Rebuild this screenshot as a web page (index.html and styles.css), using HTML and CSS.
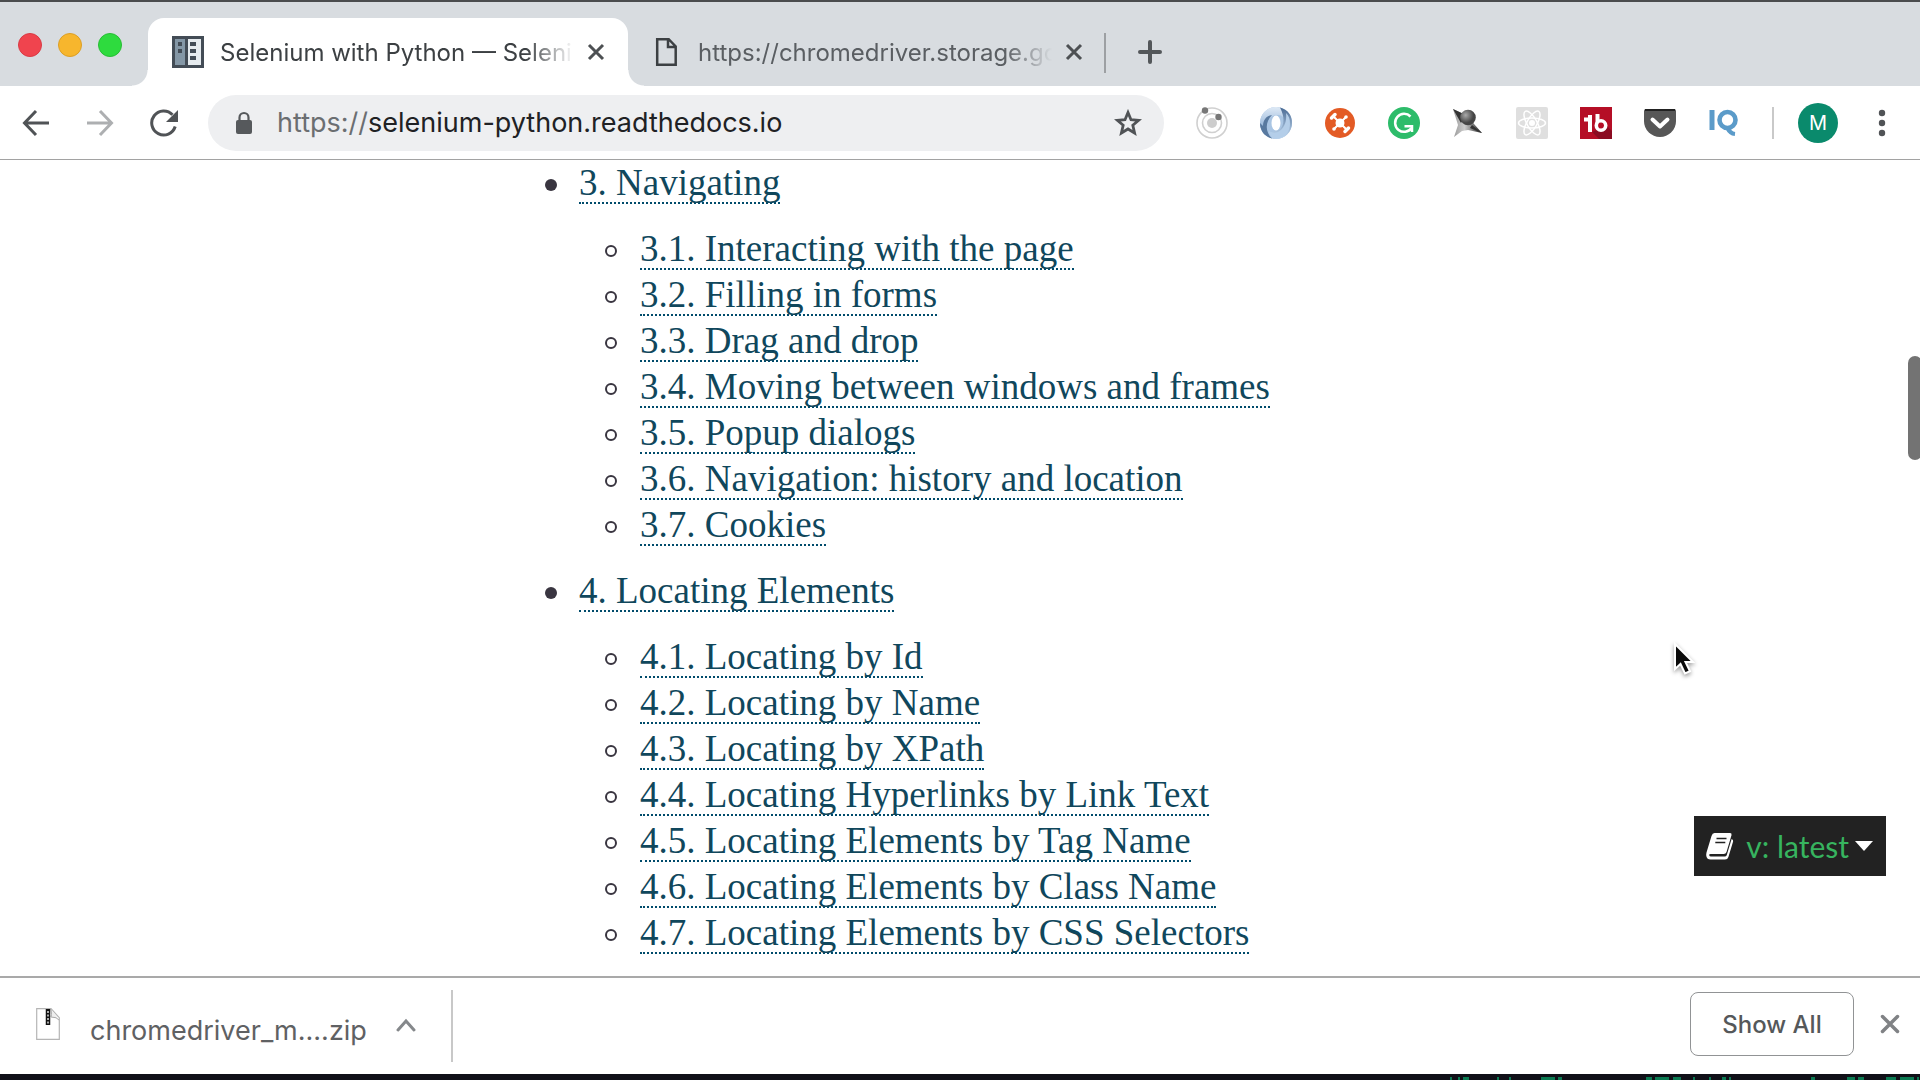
FILE: index.html
```html
<!DOCTYPE html>
<html lang="en">
<head>
<meta charset="utf-8">
<title>Selenium with Python — Selenium Python Bindings</title>
<link rel="stylesheet" href="styles.css">
</head>
<body>
<div class="browser">
  <header class="tab-strip">
    <div class="lights">
      <button class="light light-red" aria-label="Close window"></button>
      <button class="light light-yellow" aria-label="Minimize window"></button>
      <button class="light light-green" aria-label="Zoom window"></button>
    </div>
    <div class="tab tab-active">
      <svg class="icon32" viewBox="0 0 32 32"><path fill="#434c56" d="M0 0h32v32H0z"/><path fill="#8497a6" d="M3 3h10v26H3z"/><path fill="#e6ebef" d="M16 3h13v26H16z"/><path fill="#434c56" d="M6 6h4v4H6zM6 13h4v4H6zM18 6h6v4h-6zM18 13h6v4h-6zM18 20h6v4h-6z"/></svg>
      <span class="tab-title">Selenium with Python — Seleni</span>
      <button class="plain" aria-label="Close tab"><svg class="icon20" viewBox="0 0 20 20"><path d="M3 3l14 14M17 3L3 17" stroke="#4d5053" stroke-width="3"/></svg></button>
    </div>
    <div class="tab tab-idle">
      <svg class="icon32" viewBox="0 0 32 32"><path fill="none" stroke="#3c4043" stroke-width="2.500" d="M7.200 3.200h11.500l7 7.300v18.300H7.200zM18 3.500V11h8"/></svg>
      <span class="tab-title">https://chromedriver.storage.go</span>
      <button class="plain" aria-label="Close tab"><svg class="icon20" viewBox="0 0 20 20"><path d="M3 3l14 14M17 3L3 17" stroke="#4d5053" stroke-width="3"/></svg></button>
    </div>
    <span class="tab-divider"></span>
    <button class="plain new-tab" aria-label="New tab"><svg class="icon24" viewBox="0 0 24 24"><path d="M12 2v20M2 12h20" stroke="#53575a" stroke-width="4" stroke-linecap="round"/></svg></button>
  </header>

  <nav class="toolbar">
    <div class="nav-buttons">
      <button class="plain" aria-label="Back"><svg class="icon28" viewBox="0 0 28 28"><path d="M27 14H3M14 2L2.500 14 14 26" fill="none" stroke="#505356" stroke-width="3"/></svg></button>
      <button class="plain" aria-label="Forward"><svg class="icon28" viewBox="0 0 28 28"><path d="M1 14h24M14 2l11.500 12L14 26" fill="none" stroke="#adafb1" stroke-width="3"/></svg></button>
      <button class="plain" aria-label="Reload"><svg class="icon28" viewBox="0 0 28 28"><path d="M25.200 17.500A12 12 0 1 1 22.500 5.800" fill="none" stroke="#505356" stroke-width="3"/><path d="M28 1v12H16z" fill="#505356"/></svg></button>
    </div>
    <div class="omnibox">
      <svg class="icon24" viewBox="0 0 24 24"><rect x="4" y="9" width="16" height="14" rx="2" fill="#56595c"/><path d="M7.500 10V6.500a4.500 4.500 0 0 1 9 0V10" fill="none" stroke="#56595c" stroke-width="2.200"/></svg>
      <label class="scheme" for="address">https://</label>
      <input class="address" id="address" type="text" value="selenium-python.readthedocs.io">
      <button class="plain" aria-label="Bookmark"><svg class="icon28" viewBox="0 0 28 28"><path d="M14 3.500l3 7.200 7.600.6-5.800 5 1.800 7.700L14 20l-6.600 4 1.800-7.700-5.800-5 7.600-.6z" fill="none" stroke="#505356" stroke-width="2.800"/></svg></button>
    </div>
    <div class="extensions">
      <button class="plain" aria-label="Orbit"><svg class="icon32" viewBox="0 0 32 32"><g fill="none" stroke="#d0d0d0"><circle cx="16" cy="16" r="15" stroke-width="1.600"/><circle cx="16" cy="16" r="9.500" stroke-width="1.600"/></g><circle cx="16" cy="16" r="5" fill="#cdcdcd"/><circle cx="9" cy="3.500" r="3.200" fill="#777"/><circle cx="22.500" cy="10" r="3.200" fill="#777"/></svg></button>
      <button class="plain" aria-label="JSON"><svg class="icon32" viewBox="0 0 32 32"><defs><linearGradient id="ja" x1="0" y1="0" x2="0" y2="1"><stop offset="0" stop-color="#dfeaf6"/><stop offset="1" stop-color="#7ba3cf"/></linearGradient><linearGradient id="jb" x1="0" y1="0" x2="0" y2="1"><stop offset="0" stop-color="#4a6b94"/><stop offset="1" stop-color="#c6dcf2"/></linearGradient></defs><circle cx="16" cy="16" r="16" fill="#a9c5e3"/><path fill="url(#ja)" d="M20 .5A16 16 0 0 0 0 16c0 5 2 9 5 12-2-10 3-20 13-20 3 0 6 2 7 5 0-6-2-10-5-12.500z"/><path fill="#58799f" d="M0 16c0 8 5 14 12 15.500C5 25 5 15 12 8 6 9 3 13 3 19z"/><path fill="url(#jb)" d="M20 .5c8 2 12 8 12 15.500S26 32 16 32c-4-1-7-4-7-8 10 4 20-6 11-23.500z"/><path fill="#b4cee9" d="M16 32c10-1 14-8 14-15 0-5-1-8-4-11 1 9-2 16-8 19-3 1-6 1-9-1 0 4 3 7 7 8z"/><ellipse cx="16" cy="16" rx="4.500" ry="7.500" fill="#fff"/></svg></button>
      <button class="plain" aria-label="Hub"><svg class="icon32" viewBox="0 0 32 32"><circle cx="16" cy="16" r="15" fill="#e35b25"/><path d="M9 9l14 14M22 10L10 22" stroke="#fff" stroke-width="2"/><circle cx="16" cy="16" r="4.500" fill="#fff"/><path d="M7.500 11L11 7.500M21 24.500l3.500-3.500" stroke="#fff" stroke-width="3.500" stroke-linecap="round"/><circle cx="22" cy="10" r="1.800" fill="#fff"/><circle cx="10" cy="22" r="1.800" fill="#fff"/></svg></button>
      <button class="plain" aria-label="Grammar"><svg class="icon32" viewBox="0 0 32 32"><circle cx="16" cy="16" r="16" fill="#2dbc6a"/><path d="M22.500 9.500a9 9 0 1 0 1 11.500" fill="none" stroke="#fff" stroke-width="2.500"/><path d="M16.500 19.300H24V25" fill="none" stroke="#fff" stroke-width="2.500"/></svg></button>
      <button class="plain" aria-label="Star ball"><svg class="icon32" viewBox="0 0 32 32"><defs><linearGradient id="sa"><stop offset="0" stop-color="#999"/><stop offset=".4" stop-color="#ccc"/><stop offset="1" stop-color="#222"/></linearGradient><radialGradient id="sb" cx=".35" cy=".35"><stop offset="0" stop-color="#aaa"/><stop offset="1" stop-color="#454545"/></radialGradient></defs><path d="M1 2l15 7 6 8 8 9-14-3-6 1-8 6 4-12z" fill="url(#sa)"/><path d="M1 2l13 6-5 8zM20 18l10 8-12-5z" fill="#333"/><circle cx="16" cy="10.500" r="7.800" fill="url(#sb)"/></svg></button>
      <button class="plain" aria-label="React"><svg class="icon32" viewBox="0 0 32 32"><rect width="32" height="32" rx="2" fill="#dfdfdf"/><g fill="none" stroke="#fff" stroke-width="1.500"><ellipse cx="16" cy="16" rx="13.500" ry="5"/><ellipse cx="16" cy="16" rx="13.500" ry="5" transform="rotate(60 16 16)"/><ellipse cx="16" cy="16" rx="13.500" ry="5" transform="rotate(120 16 16)"/></g><circle cx="16" cy="16" r="3" fill="#fff"/></svg></button>
      <button class="plain" aria-label="Tube"><svg class="icon32" viewBox="0 0 32 32"><path fill="#b50e26" d="M0 0h32v32H0z"/><path fill="#8b0c22" d="M12 25l15-6 5 5v8H19z"/><path d="M4 12.500h8M10 8v17" fill="none" stroke="#fff" stroke-width="4"/><path d="M17.500 7v12" fill="none" stroke="#fff" stroke-width="4"/><circle cx="21" cy="18.500" r="4.700" fill="#b50e26" stroke="#fff" stroke-width="3.600"/><path d="M19.500 15.500l4.500 3-4.500 3z" fill="#b50e26"/></svg></button>
      <button class="plain" aria-label="Pocket"><svg class="icon32" viewBox="0 0 32 32"><path d="M2 2h28q2 0 2 2v10a16 16 0 0 1-32 0V4q0-2 2-2z" fill="#575757"/><path d="M1 3h30" stroke="#222" stroke-width="2"/><path d="M8.500 12.500l7.500 7 7.500-7" fill="none" stroke="#fff" stroke-width="4" stroke-linecap="round" stroke-linejoin="round"/></svg></button>
      <button class="plain" aria-label="IQ"><svg class="icon32" viewBox="0 0 32 32"><path d="M1.500 3h5v20h-5z" fill="#5b9bc9"/><circle cx="19.500" cy="13" r="8" fill="none" stroke="#5b9bc9" stroke-width="4.600"/><path d="M19 20.500q3 6 8 6.500" fill="none" stroke="#5b9bc9" stroke-width="4"/></svg></button>
    </div>
    <span class="toolbar-divider"></span>
    <button class="plain avatar" aria-label="Profile">M</button>
    <button class="plain" aria-label="Menu"><svg class="icon28" viewBox="0 0 28 28"><g fill="#505356"><circle cx="14" cy="4" r="3.200"/><circle cx="14" cy="14" r="3.200"/><circle cx="14" cy="24" r="3.200"/></g></svg></button>
  </nav>

  <main class="viewport">
    <ul class="toc">
      <li><a href="#navigating">3. Navigating</a>
        <ul class="toc-sub">
          <li><a href="#n1">3.1. Interacting with the page</a></li>
          <li><a href="#n2">3.2. Filling in forms</a></li>
          <li><a href="#n3">3.3. Drag and drop</a></li>
          <li><a href="#n4">3.4. Moving between windows and frames</a></li>
          <li><a href="#n5">3.5. Popup dialogs</a></li>
          <li><a href="#n6">3.6. Navigation: history and location</a></li>
          <li><a href="#n7">3.7. Cookies</a></li>
        </ul>
      </li>
      <li><a href="#locating">4. Locating Elements</a>
        <ul class="toc-sub">
          <li><a href="#l1">4.1. Locating by Id</a></li>
          <li><a href="#l2">4.2. Locating by Name</a></li>
          <li><a href="#l3">4.3. Locating by XPath</a></li>
          <li><a href="#l4">4.4. Locating Hyperlinks by Link Text</a></li>
          <li><a href="#l5">4.5. Locating Elements by Tag Name</a></li>
          <li><a href="#l6">4.6. Locating Elements by Class Name</a></li>
          <li><a href="#l7">4.7. Locating Elements by CSS Selectors</a></li>
        </ul>
      </li>
    </ul>
    <div class="scroll-thumb"></div>
    <button class="version">
      <svg class="icon28" viewBox="0 0 28 28"><path fill="#fff" d="M8.500 1h15.500q2 0 1.500 2.200l-5 16.800q-.6 2-2.800 2H4.500q-1.600 0-1.300 1.200.3 1.200 1.800 1.200h14.200q1.200 0 1.600-1.300l4.800-16q2 .7 1.500 2.500l-4.700 15.400q-.8 2.500-3.400 2.500H4.500Q1 27.500.3 24q-.3-1.500.2-3.500L5.500 4q.9-3 3-3z"/><path d="M10.500 6.500h10M9.300 10.500h10" stroke="#222" stroke-width="1.600"/></svg>
      <span>v: latest</span>
      <svg class="version-caret" viewBox="0 0 18 10"><path fill="#fff" d="M0 0h18l-9 10z"/></svg>
    </button>
    <svg class="cursor" viewBox="0 0 24 34"><path d="M2 2v25l5.500-5 4.500 9.500 5-2.300-4.500-9.200H20z" fill="#0a0a0a" stroke="#fff" stroke-width="2"/></svg>
  </main>

  <footer class="shelf">
    <div class="download">
      <svg class="zip" viewBox="0 0 24 32"><path d="M.7.7H15l8.300 9v21.600H.7z" fill="#fff" stroke="#b5b5b5" stroke-width="1.200"/><path d="M15 1q1 7 0 8 6 0 8 3" fill="#eee" stroke="#aaa"/><path d="M12 1v16" stroke="#111" stroke-width="4.500"/><path d="M12 3v13" stroke="#ddd" stroke-width="1.500" stroke-dasharray="2 1.500"/></svg>
      <a class="file" href="#download">chromedriver_m....zip</a>
      <button class="plain" aria-label="Download options"><svg class="icon20" viewBox="0 0 20 20"><path d="M2 14l8-9 8 9" fill="none" stroke="#85888b" stroke-width="3" stroke-linecap="round"/></svg></button>
    </div>
    <button class="show-all">Show All</button>
    <button class="plain" aria-label="Close downloads bar"><svg class="icon20" viewBox="0 0 20 20"><path d="M2.500 2.500l15 15M17.500 2.500l-15 15" stroke="#808285" stroke-width="3.500" stroke-linecap="round"/></svg></button>
  </footer>
  <div class="desktop-edge">
    <svg class="terminal" viewBox="0 0 480 3"><path d="M10 1.500h470" stroke="#0b7a52" stroke-width="3" stroke-dasharray="2 6 2 3 6 28 2 10 2 30 14 3 4 84 6 3 14 4 8 12 2 14 2 11 4 3 2 80 4 32 8 3 6 22 10 4 14 3"/></svg>
  </div>
</div>
</body>
</html>
```
FILE: styles.css
```css
*,
*::before,
*::after { box-sizing: border-box; }

body {
  margin: 0;
  font-family: Inter, Roboto, sans-serif;
  color: #3c4043;
}

.browser {
  display: flex;
  flex-direction: column;
  height: 100vh;
  background: #fff;
  overflow: hidden;
}

button { font-family: inherit; }
svg { display: block; flex: none; }

.plain {
  display: block;
  flex: none;
  padding: 0;
  border: 0;
  background: none;
}

.icon20 { width: 20px; height: 20px; }
.icon24 { width: 24px; height: 24px; }
.icon28 { width: 28px; height: 28px; }
.icon32 { width: 32px; height: 32px; }

/* Tab strip */
.tab-strip {
  display: flex;
  flex: none;
  height: 86px;
  padding-top: 16px;
  border-top: 2px solid #4a4c4e;
  background: #d8dce0;
}

.lights {
  display: flex;
  flex: none;
  gap: 16px;
  width: 148px;
  padding: 15px 0 0 18px;
}

.light {
  width: 24px;
  height: 24px;
  padding: 0;
  border: 1px solid;
  border-radius: 50%;
}

.light-red { background: #f0444e; border-color: #d93a44; }
.light-yellow { background: #f7b62d; border-color: #dc9f25; }
.light-green { background: #2edb3e; border-color: #28bd35; }

.tab {
  display: flex;
  align-items: center;
  gap: 16px;
  height: 68px;
  font-size: 24px;
}

.tab-active {
  position: relative;
  width: 480px;
  padding: 0 22px 0 24px;
  border-radius: 16px 16px 0 0;
  background: #fff;
}

.tab-active::before,
.tab-active::after {
  content: "";
  position: absolute;
  bottom: 0;
  width: 16px;
  height: 16px;
}

.tab-active::before {
  left: -16px;
  background: radial-gradient(circle at 0 0, #d8dce0 15px, #fff 16px);
}

.tab-active::after {
  right: -16px;
  background: radial-gradient(circle at 100% 0, #d8dce0 15px, #fff 16px);
}

.tab-idle {
  width: 476px;
  padding: 0 20px 0 22px;
  color: #5a5e62;
}

.tab-title {
  flex: 1;
  min-width: 0;
  margin-right: -4px;
  white-space: nowrap;
  mask-image: linear-gradient(to right, #000 calc(100% - 48px), transparent);
}

.tab-divider {
  width: 2px;
  height: 40px;
  margin-top: 15px;
  background: #9da0a3;
}

.new-tab { padding: 0 32px; height: 68px; }

/* Toolbar */
.toolbar {
  display: flex;
  flex: none;
  align-items: center;
  height: 74px;
  padding: 0 24px 0 22px;
  border-bottom: 1px solid #a2a2a2;
}

.nav-buttons {
  display: flex;
  gap: 36px;
  margin-right: 30px;
}

.omnibox {
  display: flex;
  flex: 1;
  align-items: center;
  height: 56px;
  padding: 0 22px 0 24px;
  border-radius: 28px;
  background: #eeeff1;
  font-size: 27px;
}

.scheme { margin-left: 21px; color: #6b6e71; }

.address {
  flex: 1;
  min-width: 0;
  padding: 0;
  border: 0;
  outline: 0;
  background: none;
  color: #202124;
  font: inherit;
}

.extensions {
  display: flex;
  gap: 32px;
  margin: 0 32px;
}

.toolbar-divider { width: 2px; height: 32px; background: #c9c9c9; }

.avatar {
  width: 40px;
  height: 40px;
  margin: 0 30px 0 24px;
  border-radius: 50%;
  background: #0a8a6c;
  color: #fff;
  font-size: 20px;
}

/* Document */
.viewport {
  position: relative;
  flex: 1;
  min-height: 0;
  overflow: hidden;
}

.toc,
.toc-sub {
  margin: 0;
  padding: 0;
  list-style: none;
}

.toc {
  padding-left: 579px;
  color: #393540;
  font-family: "Liberation Serif", serif;
  font-size: 37px;
  line-height: 46px;
}

.toc-sub { margin: 22px 0 20px; padding-left: 61px; }
.toc li { position: relative; }

.toc > li::before,
.toc-sub > li::before {
  content: "";
  position: absolute;
  top: 19px;
  width: 12px;
  height: 12px;
  border-radius: 50%;
}

.toc > li::before { left: -34px; background: #393540; }
.toc-sub > li::before { left: -35px; border: 2px solid #393540; }

.toc a {
  display: block;
  width: fit-content;
  height: 44px;
  border-bottom: 2px dotted #004b6b;
  color: #10475c;
  text-decoration: none;
}

.toc-sub > li { height: 46px; }

.scroll-thumb {
  position: absolute;
  top: 196px;
  right: -2px;
  width: 14px;
  height: 104px;
  border-radius: 7px;
  background: #737373;
}

.version {
  position: absolute;
  right: 34px;
  bottom: 100px;
  display: flex;
  align-items: center;
  gap: 12px;
  height: 60px;
  padding: 0 13px 0 12px;
  border: 0;
  background: #222;
  color: #37b45f;
  font-family: Lato, sans-serif;
  font-size: 30px;
  white-space: nowrap;
}

.version-caret { width: 18px; height: 10px; margin-left: -6px; }

.cursor {
  position: absolute;
  top: 482px;
  left: 1673px;
  width: 24px;
  height: 34px;
  filter: drop-shadow(0 2px 2px #0006);
}

/* Downloads shelf */
.shelf {
  display: flex;
  flex: none;
  align-items: center;
  height: 98px;
  padding: 0 20px 4px 0;
  border-top: 2px solid #a9a9a9;
}

.download {
  display: flex;
  align-items: center;
  width: 453px;
  height: 72px;
  margin: 4px auto 0 0;
  padding-left: 36px;
  border-right: 2px solid #c8c8c8;
}

.zip { width: 24px; height: 32px; margin-bottom: 4px; }

.file {
  width: 276px;
  margin: 8px 30px 0;
  color: #5f6163;
  font-size: 27px;
  text-decoration: none;
  white-space: nowrap;
}

.show-all {
  width: 164px;
  height: 64px;
  margin-right: 26px;
  border: 1px solid #919395;
  border-radius: 8px;
  background: #fff;
  color: #55585a;
  font-size: 24px;
  font-weight: 500;
}

.desktop-edge {
  display: flex;
  flex: none;
  align-items: flex-end;
  justify-content: flex-end;
  height: 6px;
  background: #101018;
}

.terminal { width: 480px; height: 3px; }
```
